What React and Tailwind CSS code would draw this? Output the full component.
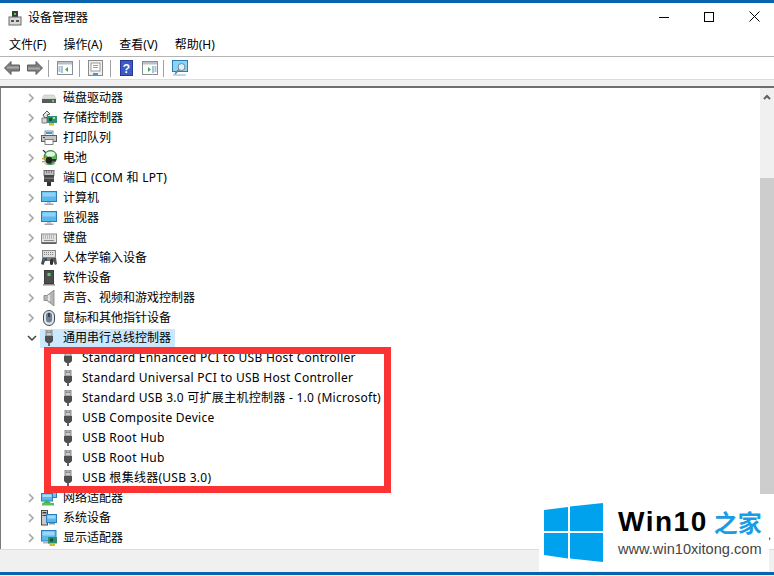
import React from 'react';

const cjk = '"Noto Sans", "Noto Sans CJK SC", sans-serif';

// latin text runs a bit wider in the picture than in Noto Sans, cjk doesn't
const spacing = (label) => (/[A-Za-z]/.test(label) ? 'tracking-[0.27px]' : 'tracking-normal');

// tree icons, all on a 16x16 grid
const Plug = () => (
  <svg width="16" height="16" viewBox="0 0 16 16">
    <rect x="5" y="0" width="6" height="6" fill="#c9c9c9" stroke="#6f6f6f" strokeWidth="0.8" />
    <rect x="6.3" y="1.5" width="1.2" height="1.4" fill="#555" />
    <rect x="8.6" y="1.5" width="1.2" height="1.4" fill="#555" />
    <path d="M4 6h8v5l-2 2H6l-2-2z" fill="#4f4f4f" />
    <rect x="7" y="13" width="2" height="3" fill="#666" />
  </svg>
);

const Disk = () => (
  <svg width="16" height="16" viewBox="0 0 16 16">
    <path d="M3 5h10l2 4H1z" fill="#dcdcdc" stroke="#b5b5b5" strokeWidth="0.5" />
    <rect x="1" y="9" width="14" height="4" fill="#5a5a5a" />
    <rect x="11" y="10" width="2" height="2" fill="#4ee04e" />
  </svg>
);

const Storage = () => (
  <svg width="16" height="16" viewBox="0 0 16 16">
    <path d="M2 5l4-4 3 3-3 1 1 2-3 1z" fill="#e8e8e8" stroke="#555" strokeWidth="1" />
    <path d="M1 8h5v5H1z" fill="#d8d8d8" stroke="#666" strokeWidth="0.8" />
    <rect x="6" y="6" width="10" height="7" fill="#2f8f6d" />
    <rect x="8" y="8" width="3" height="3" fill="#14503c" />
    <rect x="12" y="7" width="2" height="2" fill="#a5d8b8" />
    <rect x="8" y="13" width="5" height="2.5" fill="#e0b32e" />
  </svg>
);

const Printer = () => (
  <svg width="16" height="16" viewBox="0 0 16 16">
    <rect x="4" y="1" width="8" height="5" fill="#f4f4f4" stroke="#777" strokeWidth="0.8" />
    <rect x="5" y="2" width="6" height="2" fill="#3a9bdc" />
    <rect x="0.5" y="5.5" width="15" height="6" fill="#c4c4c4" stroke="#5c5c5c" />
    <rect x="4" y="9.5" width="8" height="5" fill="#fff" stroke="#666" strokeWidth="0.8" />
    <rect x="2" y="7" width="2" height="1" fill="#444" />
  </svg>
);

const Battery = () => (
  <svg width="16" height="16" viewBox="0 0 16 16">
    <path d="M2 0l4 4" stroke="#333" strokeWidth="1.2" />
    <circle cx="9.5" cy="7" r="6.5" fill="#5cb85c" stroke="#2f7a3a" />
    <ellipse cx="9.500" cy="4" rx="4.500" ry="2.600" fill="#e6f5e2" />
    <path d="M3 13.500a7 3 0 0 0 12 0" fill="#2f8d3a" />
    <rect x="1" y="8" width="5" height="1.4" fill="#c9a227" />
    <rect x="1" y="11" width="5" height="1.4" fill="#c9a227" />
    <rect x="5" y="7" width="6" height="6.500" rx="2" fill="#222" />
    <rect x="11" y="9" width="4" height="2.500" fill="#333" />
  </svg>
);

const Port = () => (
  <svg width="16" height="16" viewBox="0 0 16 16">
    <rect x="3" y="0.5" width="10" height="5" fill="#bdbdbd" stroke="#555" strokeWidth="0.8" />
    <path d="M5 2h1M7.5 2h1M10 2h1" stroke="#333" />
    <rect x="3" y="5" width="10" height="7" fill="#454545" />
    <rect x="3" y="7.5" width="10" height="1.5" fill="#777" />
    <rect x="6" y="12" width="4" height="4" fill="#333" />
  </svg>
);

const Monitor = () => (
  <svg width="16" height="16" viewBox="0 0 16 16">
    <rect x="0.5" y="1.5" width="15" height="10" fill="#5bb8ee" stroke="#2b7fb8" />
    <rect x="1.5" y="2.5" width="13" height="4" fill="#8fd2f6" />
    <rect x="6" y="12" width="4" height="1.5" fill="#b9c4cc" />
    <rect x="3.5" y="13.5" width="9" height="1.5" fill="#9ba7b0" />
  </svg>
);

const Keyboard = () => (
  <svg width="16" height="16" viewBox="0 0 16 16">
    <rect x="0.5" y="4" width="15" height="8.5" fill="#e2e2e2" stroke="#8a8a8a" />
    <path d="M2 6h12M2 8h12" stroke="#8c8c8c" strokeDasharray="1 1" />
    <rect x="3" y="10" width="10" height="1" fill="#8c8c8c" />
    <rect x="0.5" y="12.5" width="15" height="1.5" fill="#5f5f5f" />
  </svg>
);

const Hid = () => (
  <svg width="16" height="16" viewBox="0 0 16 16">
    <rect x="1.5" y="0.5" width="13" height="7" fill="#dedede" stroke="#888" />
    <path d="M3 2.500h10M3 4.500h10" stroke="#888" strokeDasharray="1 1" />
    <path d="M0 14l1.500-6h5v3H4l-1.500 4z" fill="#4a4a4a" />
    <circle cx="3" cy="10" r="1.2" fill="#2a6fb0" />
    <rect x="6" y="8" width="5" height="3" fill="#7a7a7a" />
    <path d="M10 8h5l1 6-2 1-2-4h-2z" fill="#555" />
    <rect x="9" y="9" width="3" height="6" rx="1.5" fill="#2f2f2f" />
  </svg>
);

const Tower = () => (
  <svg width="16" height="16" viewBox="0 0 16 16">
    <rect x="3" y="0" width="10" height="14" fill="#3b3b3b" />
    <rect x="4" y="1" width="8" height="12" fill="#4c4c4c" />
    <rect x="6.5" y="3" width="3" height="3" fill="#43e04f" />
    <rect x="2" y="14" width="12" height="1.5" fill="#8f8f8f" />
  </svg>
);

const Speaker = () => (
  <svg width="16" height="16" viewBox="0 0 16 16">
    <path d="M3 5.500h3L13 0v16L6 10.500H3z" fill="#b5b5b5" stroke="#808080" strokeWidth="0.8" />
    <path d="M8 5v6" stroke="#e4e4e4" strokeWidth="2" />
  </svg>
);

const Mouse = () => (
  <svg width="16" height="16" viewBox="0 0 16 16">
    <rect x="2.5" y="0.5" width="11" height="15" rx="5.5" fill="#dfe3e8" stroke="#3f4a55" />
    <rect x="5" y="2.5" width="6" height="10" rx="3" fill="#6d7f92" />
    <rect x="7" y="3" width="2" height="4" fill="#39424c" />
  </svg>
);

const Network = () => (
  <svg width="16" height="16" viewBox="0 0 16 16">
    <rect x="4.5" y="0.5" width="11" height="7" fill="#6cc1ef" stroke="#2b7fb8" />
    <rect x="0.5" y="3.5" width="11" height="7.5" fill="#5bb8ee" stroke="#2b7fb8" />
    <rect x="1.5" y="4.5" width="9" height="2.5" fill="#a6dcf8" />
    <path d="M6 10l4 3H2z" fill="#43b04c" />
    <rect x="1" y="13" width="12" height="2.5" fill="#57c061" />
  </svg>
);

const System = () => (
  <svg width="16" height="16" viewBox="0 0 16 16">
    <rect x="0.5" y="0.5" width="6" height="14.5" fill="#c9c9c9" stroke="#4c4c4c" />
    <rect x="1.5" y="2" width="4" height="1.5" fill="#3d3d3d" />
    <rect x="1.5" y="5" width="4" height="1" fill="#3d3d3d" />
    <rect x="5.5" y="4.5" width="10" height="8" fill="#5bb8ee" stroke="#2b7fb8" />
    <rect x="6.5" y="5.5" width="8" height="3" fill="#9bd8f7" />
    <rect x="8" y="13" width="6" height="1.5" fill="#8d99a3" />
  </svg>
);

const Display = () => (
  <svg width="16" height="16" viewBox="0 0 16 16">
    <rect x="0.5" y="0.5" width="14.5" height="10.5" fill="#5bb8ee" stroke="#2b7fb8" />
    <rect x="1.5" y="1.5" width="12" height="4" fill="#9bd8f7" />
    <rect x="2" y="12" width="7" height="1.5" fill="#a9b3ba" />
    <rect x="7" y="7" width="9" height="6.5" fill="#2f8f6d" />
    <rect x="9" y="8.5" width="3" height="3" fill="#14503c" />
    <rect x="8.5" y="13.5" width="5.5" height="2.5" fill="#e0b32e" />
  </svg>
);

const topRows = [
  [Disk, '磁盘驱动器'],
  [Storage, '存储控制器'],
  [Printer, '打印队列'],
  [Battery, '电池'],
  [Port, '端口 (COM 和 LPT)'],
  [Monitor, '计算机'],
  [Monitor, '监视器'],
  [Keyboard, '键盘'],
  [Hid, '人体学输入设备'],
  [Tower, '软件设备'],
  [Speaker, '声音、视频和游戏控制器'],
  [Mouse, '鼠标和其他指针设备'],
];

const usbRows = [
  'Standard Enhanced PCI to USB Host Controller',
  'Standard Universal PCI to USB Host Controller',
  'Standard USB 3.0 可扩展主机控制器 - 1.0 (Microsoft)',
  'USB Composite Device',
  'USB Root Hub',
  'USB Root Hub',
  'USB 根集线器(USB 3.0)',
];

const bottomRows = [
  [Network, '网络适配器'],
  [System, '系统设备'],
  [Display, '显示适配器'],
];

function ClosedRow({ icon: Icon, label }) {
  return (
    <div className="flex h-5 items-center pl-[26px]">
      <svg width="8" height="10" viewBox="0 0 8 10" className="mr-[6px]">
        <path d="M2 1l4 4-4 4" fill="none" stroke="#a6a6a6" strokeWidth="1.6" />
      </svg>
      <Icon />
      <span className={`ml-[6px] leading-5 ${spacing(label)}`}>{label}</span>
    </div>
  );
}

function ToolbarSep() {
  return <div className="h-[17px] w-px bg-[#a0a0a0]" />;
}

function Arrow({ flip }) {
  return (
    <svg width="16" height="14" viewBox="0 0 16 14" className={flip ? 'rotate-180' : ''}>
      <path d="M7 0.500L0.500 7 7 13.500V10h8.500V4H7z" fill="#7c7c7c" stroke="#5e5e5e" strokeWidth="1" />
      <path d="M3 6.500h12" stroke="#a9a9a9" strokeWidth="2" />
    </svg>
  );
}

function PaneIcon({ right }) {
  return (
    <svg width="16" height="14" viewBox="0 0 16 14">
      <rect x="0.5" y="0.5" width="15" height="13" fill="#fff" stroke="#8a8f96" />
      <rect x="1" y="1" width="14" height="2.5" fill="#b9bfc6" />
      <path d={right ? 'M11 5v7M12.500 6h2M12.500 8h2M12.500 10h2' : 'M5 5v7M1.500 6h2M1.500 8h2M1.500 10h2'} stroke="#5b87b5" />
      <path d={right ? 'M6 6v5l3-2.500z' : 'M11 6v5l-3-2.500z'} fill="#3fae49" />
    </svg>
  );
}

export default function App() {
  return (
    <div
      className="relative flex h-[576px] w-[774px] flex-col overflow-hidden bg-white text-[12px] text-black"
      style={{ fontFamily: cjk }}
    >
      <div className="h-[3px] bg-[#0a64ad]" />

      {/* title bar */}
      <div className="flex h-[27px] items-center pl-2 pr-[14px]">
        <svg width="14" height="16" viewBox="0 0 14 16" className="mt-[2px]">
          <rect x="4" y="1" width="6" height="6" fill="#3b3b3b" />
          <rect x="6" y="3" width="2" height="2" fill="#46d050" />
          <rect x="1" y="7" width="12" height="8" fill="#d8d8d8" stroke="#6a6a6a" />
          <rect x="3" y="10" width="3" height="2" fill="#555" />
          <rect x="8" y="10" width="3" height="2" fill="#555" />
        </svg>
        <span className="ml-[6px] mt-[2px] flex-1">设备管理器</span>
        <div className="flex items-center gap-[35px]">
          <svg width="10" height="10" viewBox="0 0 10 10">
            <path d="M0 5.500h10" stroke="#000" />
          </svg>
          <svg width="10" height="10" viewBox="0 0 10 10">
            <rect x="0.500" y="0.500" width="9" height="9" fill="none" stroke="#000" />
          </svg>
          <svg width="11" height="11" viewBox="0 0 11 11">
            <path d="M0.500 0.500l10 10M10.500 0.500l-10 10" stroke="#000" />
          </svg>
        </div>
      </div>

      {/* menu */}
      <div className="flex h-[26px] items-center gap-[17px] pl-[9px] pt-1">
        <span>文件(F)</span>
        <span>操作(A)</span>
        <span>查看(V)</span>
        <span>帮助(H)</span>
      </div>
      <div className="h-px bg-[#b4b4b4]" />

      {/* toolbar */}
      <div className="flex h-[22px] items-center pl-1">
        <Arrow />
        <div className="w-[7px]" />
        <Arrow flip />
        <div className="w-[5px]" />
        <ToolbarSep />
        <div className="w-2" />
        <PaneIcon />
        <div className="w-[6px]" />
        <ToolbarSep />
        <div className="w-2" />
        <svg width="15" height="16" viewBox="0 0 15 16">
          <rect x="0.500" y="0.500" width="14" height="15" fill="#efefef" stroke="#8a8a8a" />
          <rect x="3" y="3" width="9" height="8" fill="#fff" stroke="#9a9a9a" />
          <path d="M5 5.500h5M5 7.500h5" stroke="#9a9a9a" />
          <rect x="5" y="13" width="5" height="2" fill="#3a9bdc" />
        </svg>
        <div className="w-[7px]" />
        <ToolbarSep />
        <div className="w-[9px]" />
        <svg width="13" height="16" viewBox="0 0 13 16">
          <rect width="13" height="16" fill="#24379b" />
          <rect x="1" y="1" width="11" height="14" fill="#3d59c4" />
          <text x="6.500" y="12.500" textAnchor="middle" fontSize="12" fontWeight="700" fill="#fff" fontFamily="Liberation Sans">?</text>
        </svg>
        <div className="w-[9px]" />
        <PaneIcon right />
        <div className="w-[5px]" />
        <ToolbarSep />
        <div className="w-2" />
        <svg width="16" height="16" viewBox="0 0 16 16">
          <rect x="0.500" y="0.500" width="15" height="11" fill="#8fd2f6" stroke="#2b7fb8" />
          <circle cx="9.500" cy="7" r="3.500" fill="#d8f0fb" stroke="#6f8796" />
          <path d="M7 9.500L3 14" stroke="#7d7d7d" strokeWidth="1.600" />
          <path d="M1 15h13" stroke="#7fb2d0" />
        </svg>
      </div>

      <div className="h-[7px] border-t border-[#dcdcdc] bg-[#f0f0f0]" />
      <div className="h-[2px] bg-[#6e6e6e]" />

      {/* tree and scrollbar */}
      <div className="flex h-[461px]">
        <div className="flex-1 border-l border-[#7a7a7a]">
          {topRows.map(([icon, label], i) => (
            <ClosedRow key={i} icon={icon} label={label} />
          ))}
          <div className="flex h-5 items-center pl-[26px]">
            <svg width="10" height="8" viewBox="0 0 10 8" className="mr-[3px]">
              <path d="M1 2l4 4 4-4" fill="none" stroke="#404040" strokeWidth="1.500" />
            </svg>
            <div className="flex h-[19px] items-center bg-[#cce8ff] pl-px pr-1">
              <Plug />
              <span className="ml-[6px]">通用串行总线控制器</span>
            </div>
          </div>
          {usbRows.map((label, i) => (
            <div key={i} className="flex h-5 items-center pl-[59px]">
              <Plug />
              <span className={`ml-[6px] ${spacing(label)}`}>{label}</span>
            </div>
          ))}
          {bottomRows.map(([icon, label], i) => (
            <ClosedRow key={i} icon={icon} label={label} />
          ))}
        </div>

        <div className="flex w-[14px] flex-col bg-[#f0f0f0]">
          <div className="flex h-[90px] justify-center pt-[6px]">
            <svg width="8" height="6" viewBox="0 0 8 6">
              <path d="M1 5l3-3 3 3" fill="none" stroke="#606060" strokeWidth="2" />
            </svg>
          </div>
          <div className="h-[316px] bg-[#cdcdcd]" />
          <div className="flex flex-1 items-end justify-center bg-white pb-[6px]">
            <svg width="8" height="6" viewBox="0 0 8 6">
              <path d="M1 1l3 3 3-3" fill="none" stroke="#606060" strokeWidth="2" />
            </svg>
          </div>
        </div>
      </div>

      <div className="h-[23px] border-t border-[#dcdcdc] bg-[#f0f0f0]" />
      <div className="h-[3px] bg-[#0a64ad]" />

      {/* watermark over the corner */}
      <div className="absolute left-[539px] top-[494px] flex h-[77px] w-[230px] items-center bg-white pl-[5px]">
        <svg width="59" height="59" viewBox="0 0 59 59">
          <path d="M0 7l24-3v24H0zM26 3.500L59 0v28H26zM0 30h24v25.500L0 52zM26 30h33v29l-33-3.500z" fill="#00a2ed" />
        </svg>
        <div className="ml-[15px] flex flex-col">
          <div className="flex items-center leading-none">
            <span className="text-[28px] font-bold tracking-[1.5px] text-black" style={{ fontFamily: '"Liberation Sans", sans-serif' }}>Win10</span>
            <span className="ml-[6px] text-[24px] font-bold text-[#1a9be6]" style={{ fontFamily: '"Noto Sans CJK SC", sans-serif' }}>之家</span>
          </div>
          <span className="mt-[6px] text-[14.600px] leading-none text-[#444]" style={{ fontFamily: '"Liberation Sans", sans-serif' }}>www.win10xitong.com</span>
        </div>
      </div>

      {/* red annotation box */}
      <div className="absolute left-[44px] top-[347px] h-[146px] w-[347px] border-[7px] border-[#fb3333]" />
    </div>
  );
}
